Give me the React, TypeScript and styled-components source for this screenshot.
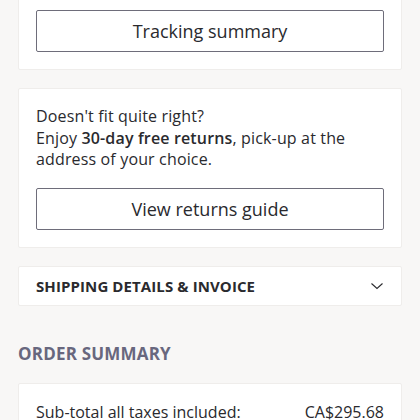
import styled, { createGlobalStyle } from 'styled-components';

const GlobalStyle = createGlobalStyle`
  html, body {
    margin: 0;
    padding: 0;
    background: #f8f7f6;
  }
  body {
    font-family: "Open Sans", "Liberation Sans", sans-serif;
    color: #2a2a2e;
  }
`;

const Page = styled.div`
  margin-top: -8px;
  padding: 0 18px;
  display: flex;
  flex-direction: column;
`;

const Card = styled.section<{ $compact?: boolean }>`
  background: #ffffff;
  border: 1px solid #efedeb;
  border-radius: 2px;
  padding: ${({ $compact }) => ($compact ? '9px 17px' : '17px')};
  margin-bottom: 18px;
`;

const OutlineButton = styled.button`
  display: block;
  width: 100%;
  height: 42px;
  background: #ffffff;
  border: 1px solid #6e6d7a;
  border-radius: 2px;
  font-family: inherit;
  font-size: 18px;
  color: #2a2a2e;
  cursor: pointer;
`;

const Text = styled.p`
  margin: 0 0 17px;
  font-size: 16px;
  line-height: 21.5px;
  letter-spacing: 0.15px;
  b {
    font-weight: 600;
  }
`;

const AccordionRow = styled.div`
  display: flex;
  justify-content: space-between;
  align-items: center;
  height: 20px;
`;

const AccordionTitle = styled.span`
  font-size: 15px;
  font-weight: 700;
  text-transform: uppercase;
  letter-spacing: 0.1px;
`;

const SectionTitle = styled.h2`
  margin: 18px 0 18px;
  font-size: 17px;
  font-weight: 700;
  color: #68677e;
  text-transform: uppercase;
  letter-spacing: 0.2px;
`;

const SummaryRow = styled.div`
  display: flex;
  justify-content: space-between;
  font-size: 16px;
  line-height: 22px;
`;

const Chevron = () => (
  <svg width="14" height="14" viewBox="0 0 14 14" fill="none">
    <path d="M1.5 4.5 L7 9.5 L12.5 4.5" stroke="#2a2a2e" strokeWidth="1.1" />
  </svg>
);

export default function App() {
  return (
    <>
      <GlobalStyle />
      <Page>
        <Card>
          <OutlineButton>Tracking summary</OutlineButton>
        </Card>
        <Card>
          <Text>
            Doesn't fit quite right?
            <br />
            Enjoy <b>30-day free returns</b>, pick-up at the address of your choice.
          </Text>
          <OutlineButton>View returns guide</OutlineButton>
        </Card>
        <Card $compact>
          <AccordionRow>
            <AccordionTitle>Shipping details &amp; invoice</AccordionTitle>
            <Chevron />
          </AccordionRow>
        </Card>
        <SectionTitle>Order summary</SectionTitle>
        <Card>
          <SummaryRow>
            <span>Sub-total all taxes included:</span>
            <span>CA$295.68</span>
          </SummaryRow>
        </Card>
      </Page>
    </>
  );
}
